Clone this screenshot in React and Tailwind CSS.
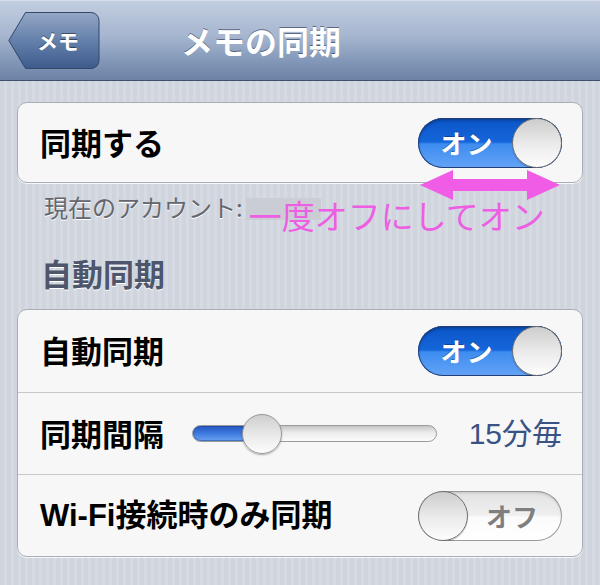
import React from "react";

const JP = "font-['Noto_Sans_CJK_JP',sans-serif]";

function Knob() {
  return (
    <div className="h-[50px] w-[50px] shrink-0 rounded-full border border-[#6f6f6f] bg-[linear-gradient(#cdcdcd,#ececec_55%,#fdfdfd)] shadow-[0_1px_1px_rgba(0,0,0,0.25)]" />
  );
}

function Toggle({ on }) {
  if (on) {
    return (
      <div className="flex h-[50px] w-[144px] shrink-0 items-center overflow-hidden rounded-full bg-[linear-gradient(#0a55c6_0%,#1566db_48%,#3d8cf0_52%,#64a4f6_100%)] shadow-[inset_0_0_0_1px_#23407a,inset_0_2px_3px_rgba(0,0,0,0.35)]">
        <span className="flex-1 pl-[3px] text-center text-[26px] font-bold leading-none text-white [text-shadow:0_-1px_0_rgba(0,0,0,0.3)]">
          オン
        </span>
        <Knob />
      </div>
    );
  }
  return (
    <div className="flex h-[50px] w-[144px] shrink-0 items-center overflow-hidden rounded-full bg-[linear-gradient(#e2e2e2_0%,#efefef_48%,#fbfbfb_52%,#ffffff_100%)] shadow-[inset_0_0_0_1px_#9a9a9a,inset_0_2px_3px_rgba(0,0,0,0.15)]">
      <Knob />
      <span className="flex-1 pr-[6px] text-center text-[26px] font-bold leading-none text-[#7f7f7f] [text-shadow:0_1px_0_#fff]">
        オフ
      </span>
    </div>
  );
}

function Label({ children, className = "" }) {
  return (
    <span className={`text-[31px] font-bold leading-none text-black ${className}`}>
      {children}
    </span>
  );
}

export default function App() {
  return (
    <div
      className={`h-[585px] w-[600px] overflow-hidden ${JP} bg-[repeating-linear-gradient(90deg,#d0d4dc_0px,#d0d4dc_4px,#d6dae2_4px,#d6dae2_7px)]`}
    >
      <header className="flex h-[81px] items-center border-b border-[#3e506e] bg-[linear-gradient(#c3cee1_0%,#a6b6cf_45%,#8499b9_75%,#6c83a6_100%)] shadow-[inset_0_1px_0_#d6deeb]">
        <div className="relative ml-[8px] flex h-[57px] w-[92px] items-center">
          <svg className="absolute inset-0" width="92" height="57" viewBox="0 0 92 57">
            <defs>
              <linearGradient id="bb" x1="0" y1="0" x2="0" y2="1">
                <stop offset="0" stopColor="#94a7c6" />
                <stop offset="0.5" stopColor="#6480ab" />
                <stop offset="1" stopColor="#3d5a8c" />
              </linearGradient>
            </defs>
            <path
              d="M17.5 0.5H83a8 8 0 0 1 8 8V48.5a8 8 0 0 1-8 8H17.5L0.8 28.5Z"
              fill="url(#bb)"
              stroke="#33486d"
            />
          </svg>
          <span className="relative pl-[29px] text-[21px] font-bold leading-none text-white [text-shadow:0_-1px_0_rgba(0,0,0,0.45)]">
            メモ
          </span>
        </div>
        <h1 className="ml-[81px] text-[32px] font-bold leading-none text-white [text-shadow:0_-1px_0_rgba(35,50,80,0.6)]">
          メモの同期
        </h1>
      </header>

      <main className="px-[17px] pt-[21px]">
        <div className="relative">
          <div className="rounded-[10px] border border-[#a9aeb6] bg-[#f7f7f7] shadow-[0_1px_0_rgba(255,255,255,0.8)]">
            <div className="flex h-[79px] items-center justify-between pl-[22px] pr-[20px]">
              <Label className="pb-[3px]">同期する</Label>
              <Toggle on />
            </div>
          </div>

          <div className="flex items-start pl-[27px] pt-[12px]">
            <span className="text-[24px] leading-none text-[#64676f] [text-shadow:0_1px_0_#fff]">
              現在のアカウント:
            </span>
            <span className="relative ml-[6px] mt-[4px]">
              <span className="absolute left-[-3px] top-[-1px] h-[22px] w-[75px] bg-[#cacdd4]" />
              <span className="relative text-[33px] leading-none text-[#ec5fe2]">
                一度オフにしてオン
              </span>
            </span>
          </div>

          <svg
            className="absolute left-[401px] top-[66px]"
            width="144"
            height="36"
            viewBox="0 0 144 36"
          >
            <path
              d="M2 17 L35 2 L35 11 L109 11 L109 2 L142 17 L109 32 L109 23 L35 23 L35 32 Z"
              fill="#f05ce6"
            />
          </svg>
        </div>

        <h2 className="mt-[23px] pl-[24px] text-[31px] font-bold leading-none text-[#4d566b] [text-shadow:0_1px_0_#fff]">
          自動同期
        </h2>

        <div className="mt-[21px] rounded-[10px] border border-[#a9aeb6] bg-[#f7f7f7] shadow-[0_1px_0_rgba(255,255,255,0.8)]">
          <div className="flex h-[82px] items-center justify-between pl-[22px] pr-[20px]">
            <Label className="pb-[3px]">自動同期</Label>
            <Toggle on />
          </div>
          <div className="flex h-[82px] items-center border-t border-[#c6c8cc] pl-[22px] pr-[20px]">
            <Label className="w-[152px] pb-[3px]">同期間隔</Label>
            <div className="relative h-[17px] w-[245px] rounded-full border border-[#9a9a9a] bg-[linear-gradient(#c6c6c6,#ececec_45%,#fbfbfb)]">
              <div className="h-full w-[72px] rounded-l-full bg-[linear-gradient(#2456bf,#3d7bdf_50%,#6aa1ef)] shadow-[inset_0_0_0_1px_rgba(30,70,150,0.5)]" />
              <div className="absolute left-[49px] top-1/2 h-[40px] w-[40px] -translate-y-1/2 rounded-full border border-[#989898] bg-[linear-gradient(#cecece,#ededed_60%,#fcfcfc)] shadow-[0_1px_2px_rgba(0,0,0,0.3)]" />
            </div>
            <span className="ml-auto pb-[3px] text-[30px] leading-none text-[#3a5283]">
              <span className="font-['Liberation_Sans',sans-serif]">15</span>分毎
            </span>
          </div>
          <div className="flex h-[82px] items-center justify-between border-t border-[#c6c8cc] pl-[22px] pr-[20px]">
            <Label className="pb-[3px]">
              <span className="font-['Liberation_Sans',sans-serif]">Wi-Fi</span>接続時のみ同期
            </Label>
            <Toggle on={false} />
          </div>
        </div>
      </main>
    </div>
  );
}
